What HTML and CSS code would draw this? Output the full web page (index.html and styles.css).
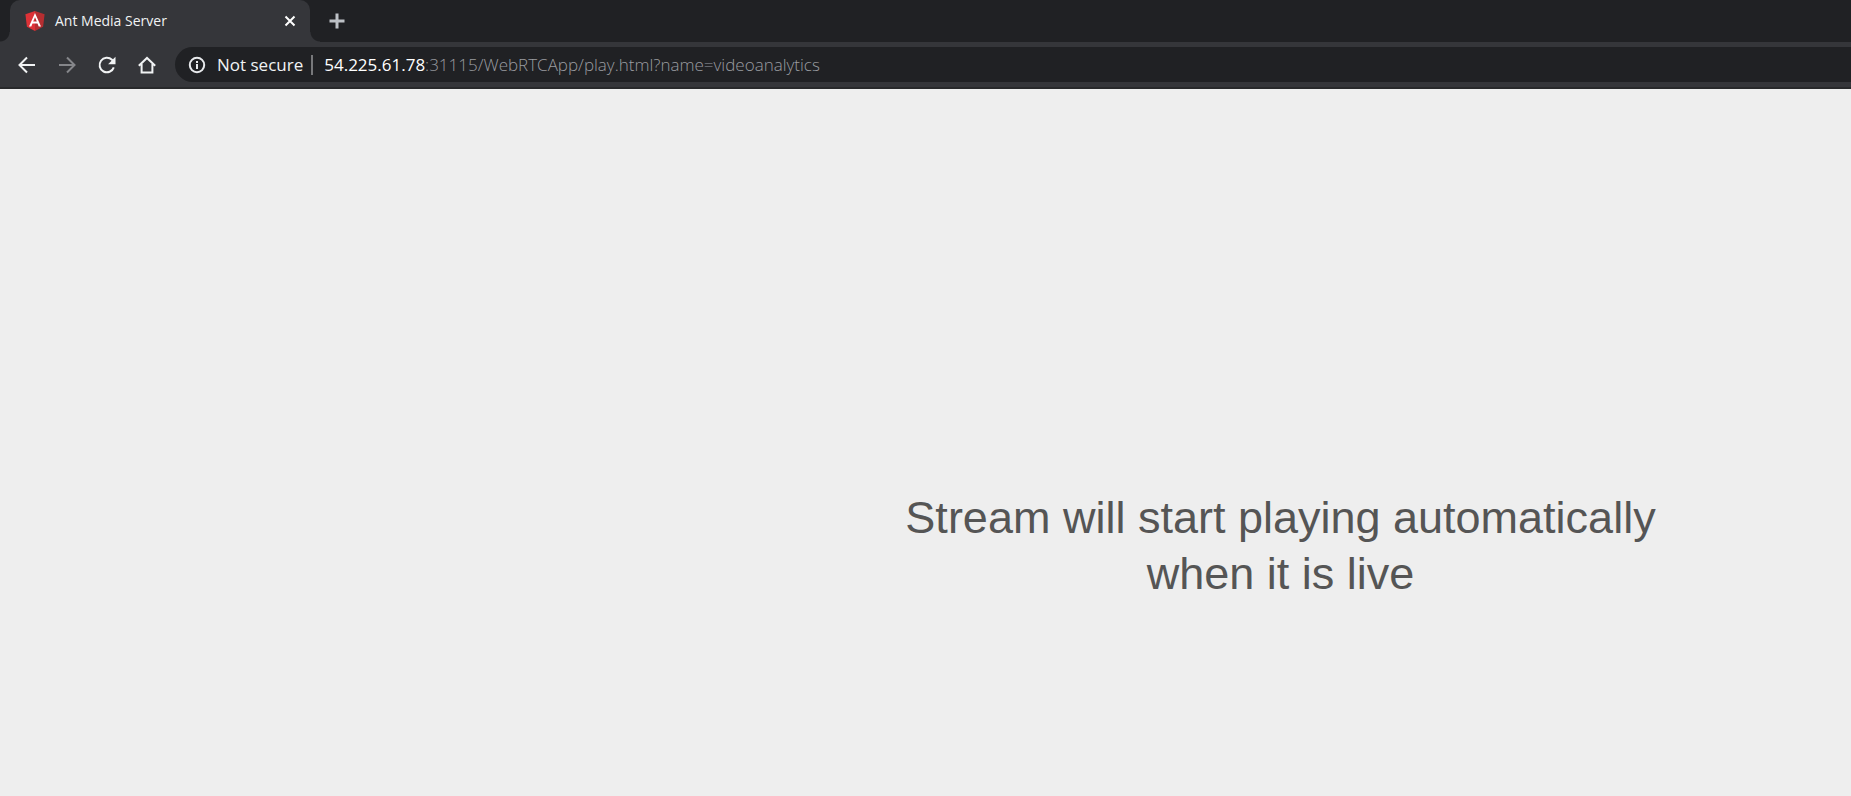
FILE: index.html
```
<!DOCTYPE html>
<html lang="en">
<head>
<meta charset="utf-8">
<title>Ant Media Server</title>
<link rel="stylesheet" href="styles.css">
</head>
<body>
<header class="browser">
  <div class="tab-strip">
    <div class="tab">
      <svg class="favicon" viewBox="0 0 20 22" aria-hidden="true">
        <path fill="#dd3237" d="M10 1 .4 4.3l1.5 12.4L10 21z"/>
        <path fill="#b52e31" d="M10 1l9.6 3.3-1.5 12.4L10 21z"/>
        <path fill="#fff" fill-rule="evenodd" d="M10 3 4 16.500h2.300l1.200-3h5l1.200 3H16zm0 4.300 1.800 4.300H8.200z"/>
      </svg>
      <span class="tab-title">Ant Media Server</span>
      <button class="tab-close" type="button" aria-label="Close tab">
        <svg class="close-icon" viewBox="0 0 12 12" aria-hidden="true"><path d="M1.500 1.500l9 9m0-9l-9 9"/></svg>
      </button>
    </div>
    <button class="new-tab" type="button" aria-label="New tab">
      <svg class="plus-icon" viewBox="0 0 16 16" aria-hidden="true"><path d="M8 .5v15M.5 8h15"/></svg>
    </button>
  </div>
  <div class="toolbar">
    <nav class="nav-buttons">
      <button class="nav-button" type="button" aria-label="Back">
        <svg class="nav-icon" viewBox="0 0 20 20" aria-hidden="true"><path d="M18 10H3M10 2.500 2.500 10l7.500 7.500"/></svg>
      </button>
      <button class="nav-button disabled" type="button" aria-label="Forward" disabled>
        <svg class="nav-icon" viewBox="0 0 20 20" aria-hidden="true"><path d="M2 10h15M10 2.500l7.500 7.500-7.500 7.500"/></svg>
      </button>
      <button class="nav-button" type="button" aria-label="Reload">
        <svg class="nav-icon" viewBox="0 0 20 20" aria-hidden="true"><path d="M16.800 12.400A7.300 7.300 0 1 1 15 4.800L16.800 6.700"/><path class="solid" d="M18.500 1.800v7.400h-7.400z"/></svg>
      </button>
      <button class="nav-button" type="button" aria-label="Home">
        <svg class="nav-icon" viewBox="0 0 20 20" aria-hidden="true"><path d="M1.800 10.800 10 3l8.200 7.800M4.600 9v8.500h10.800V9"/></svg>
      </button>
    </nav>
    <div class="omnibox">
      <button class="site-info" type="button">
        <svg class="info-icon" viewBox="0 0 18 18" aria-hidden="true"><circle cx="9" cy="9" r="7.200"/><path d="M9 8v5M9 5v2"/></svg>
        <span>Not secure</span>
      </button>
      <span class="divider"></span>
      <div class="url"><span class="host">54.225.61.78</span>:31115/WebRTCApp/play.html?name=videoanalytics</div>
    </div>
  </div>
</header>
<main class="page">
  <p class="message">Stream will start playing automatically when it is live</p>
</main>
</body>
</html>
```
FILE: styles.css
```
* {
  box-sizing: border-box;
}

body {
  margin: 0;
  min-height: 100vh;
  background: #eee;
  font-family: "Liberation Sans", Arial, sans-serif;
}

button {
  display: flex;
  align-items: center;
  justify-content: center;
  padding: 0;
  border: 0;
  background: none;
  color: inherit;
  font: inherit;
}

svg {
  display: block;
  flex: none;
  fill: none;
  stroke: none;
}

.browser {
  background: #35363a;
  border-bottom: 2px solid #28292b;
  color: #f1f3f4;
  font-family: "Segoe UI", "Open Sans", sans-serif;
}

.tab-strip {
  display: flex;
  height: 42px;
  padding-left: 10px;
  background: #202124;
}

.tab {
  position: relative;
  display: flex;
  align-items: center;
  width: 300px;
  padding: 0 12px 0 15px;
  border-radius: 10px 10px 0 0;
  background: #35363a;
}

.tab::before,
.tab::after {
  position: absolute;
  bottom: 0;
  width: 10px;
  height: 10px;
  content: "";
}

.tab::before {
  right: 100%;
  background: radial-gradient(circle at 0 0, #202124 9px, #35363a 10px);
}

.tab::after {
  left: 100%;
  background: radial-gradient(circle at 100% 0, #202124 9px, #35363a 10px);
}

.favicon {
  width: 20px;
  height: 22px;
}

.tab-title {
  flex: 1;
  margin-left: 10px;
  font-size: 14px;
  line-height: 20px;
}

.tab-close {
  width: 16px;
  height: 20px;
}

.close-icon {
  width: 12px;
  height: 12px;
  stroke: #fff;
  stroke-width: 2;
}

.new-tab {
  width: 34px;
  margin-left: 10px;
  color: #bdc1c6;
}

.plus-icon {
  width: 16px;
  height: 16px;
  stroke: currentColor;
  stroke-width: 3;
}

.toolbar {
  display: flex;
  align-items: center;
  padding: 5px 0 5px 11px;
}

.nav-buttons {
  display: flex;
  gap: 8px;
  margin-right: 12px;
}

.nav-button {
  width: 32px;
  height: 32px;
  color: #f1f3f4;
}

.nav-button.disabled {
  color: #85868a;
}

.nav-icon {
  width: 20px;
  height: 20px;
  stroke: currentColor;
  stroke-width: 2;
}

.nav-icon .solid {
  fill: currentColor;
  stroke: none;
}

.omnibox {
  display: flex;
  flex: 1;
  align-items: center;
  height: 35px;
  padding-left: 13px;
  border-radius: 18px 0 0 18px;
  background: #202124;
  font-size: 17px;
  line-height: 24px;
  white-space: nowrap;
}

.site-info {
  gap: 11px;
}

.info-icon {
  width: 18px;
  height: 18px;
  stroke: #e8eaed;
  stroke-width: 2;
}

.divider {
  width: 2px;
  height: 20px;
  margin: 0 11px 0 8px;
  background: #77787b;
}

.url {
  color: #9a9ca0;
  font-weight: 300;
}

.host {
  color: #fff;
  font-weight: 400;
}

.page {
  display: flex;
  justify-content: center;
  padding: 401px 0 0 710px;
}

.message {
  max-width: 800px;
  margin: 0;
  color: #555;
  font-size: 45px;
  line-height: 56px;
  text-align: center;
}
```
